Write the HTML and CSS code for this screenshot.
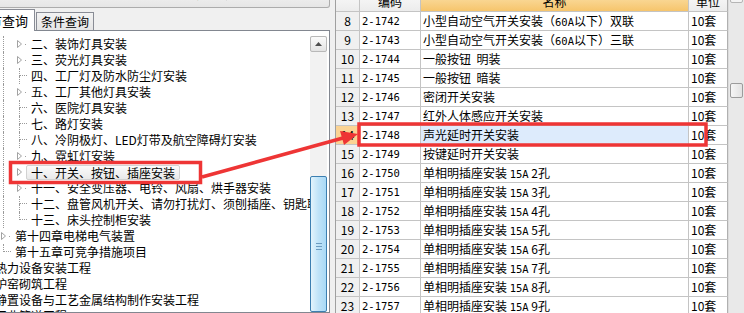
FILE: index.html
```html
<!DOCTYPE html>
<html lang="zh-CN">
<head>
    <meta charset="UTF-8">
    <title>定额查询</title>
    <link rel="stylesheet" href="styles.css">
</head>
<body>
    <div class="window">
        <div class="left">
            <div class="combo">
                <span class="combo-text">全统 安装工程预算定额河北省消耗量定额(2012)</span>
                <span class="combo-btn"></span>
            </div>
            <div class="tabs">
                <div class="tab active">章节查询</div>
                <div class="tab">条件查询</div>
            </div>
            <div class="treebox">
                <div class="tree">
                    <div class="row"><i class="guide"></i><i class="exp"><svg width="14" height="16"><polygon points="1.5,4.5 5.5,8 1.5,11.5" fill="#fff" stroke="#a2a2a2"/><rect x="9" y="8" width="1" height="1" fill="#a0a0a0"/></svg></i><span class="label">二、装饰灯具安装</span></div>
                    <div class="row"><i class="guide"></i><i class="exp"><svg width="14" height="16"><polygon points="1.5,4.5 5.5,8 1.5,11.5" fill="#fff" stroke="#a2a2a2"/><rect x="9" y="8" width="1" height="1" fill="#a0a0a0"/></svg></i><span class="label">三、荧光灯具安装</span></div>
                    <div class="row"><i class="guide"></i><i class="conn"><b class="up"></b><b class="down"></b></i><span class="label">四、工厂灯及防水防尘灯安装</span></div>
                    <div class="row"><i class="guide"></i><i class="exp"><svg width="14" height="16"><polygon points="1.5,4.5 5.5,8 1.5,11.5" fill="#fff" stroke="#a2a2a2"/><rect x="9" y="8" width="1" height="1" fill="#a0a0a0"/></svg></i><span class="label">五、工厂其他灯具安装</span></div>
                    <div class="row"><i class="guide"></i><i class="conn"><b class="up"></b><b class="down"></b></i><span class="label">六、医院灯具安装</span></div>
                    <div class="row"><i class="guide"></i><i class="conn"><b class="up"></b><b class="down"></b></i><span class="label">七、路灯安装</span></div>
                    <div class="row"><i class="guide"></i><i class="conn"><b class="up"></b><b class="down"></b></i><span class="label">八、冷阴极灯、LED灯带及航空障碍灯安装</span></div>
                    <div class="row"><i class="guide"></i><i class="exp"><svg width="14" height="16"><polygon points="1.5,4.5 5.5,8 1.5,11.5" fill="#fff" stroke="#a2a2a2"/><rect x="9" y="8" width="1" height="1" fill="#a0a0a0"/></svg></i><span class="label">九、霓虹灯安装</span></div>
                    <div class="row"><i class="guide"></i><i class="exp"><svg width="14" height="16"><polygon points="1.5,4.5 5.5,8 1.5,11.5" fill="#fff" stroke="#a2a2a2"/></svg></i><span class="label selected">十、开关、按钮、插座安装</span></div>
                    <div class="row"><i class="guide"></i><i class="exp"><svg width="14" height="16"><polygon points="1.5,4.5 5.5,8 1.5,11.5" fill="#fff" stroke="#a2a2a2"/><rect x="9" y="8" width="1" height="1" fill="#a0a0a0"/></svg></i><span class="label">十一、安全变压器、电铃、风扇、烘手器安装</span></div>
                    <div class="row"><i class="guide"></i><i class="conn"><b class="up"></b><b class="down"></b></i><span class="label">十二、盘管风机开关、请勿打扰灯、须刨插座、钥匙取电器安装</span></div>
                    <div class="row"><i class="guide"></i><i class="conn last"><b class="up"></b><b class="down"></b></i><span class="label">十三、床头控制柜安装</span></div>
                    <div class="row"><i class="exp"><svg width="14" height="16"><polygon points="1.5,4.5 5.5,8 1.5,11.5" fill="#fff" stroke="#a2a2a2"/><rect x="9" y="8" width="1" height="1" fill="#a0a0a0"/></svg></i><span class="label">第十四章电梯电气装置</span></div>
                    <div class="row"><i class="conn last"><b class="up"></b><b class="down"></b></i><span class="label">第十五章可竞争措施项目</span></div>
                    <div class="row"><span class="label top">热力设备安装工程</span></div>
                    <div class="row"><span class="label top">炉窑砌筑工程</span></div>
                    <div class="row"><span class="label top">静置设备与工艺金属结构制作安装工程</span></div>
                    <div class="row"><span class="label top">工业管道工程</span></div>
                </div>
                <div class="vscroll">
                    <div class="sbtn"><svg width="7" height="4"><polygon points="0,4 3.5,0 7,4" fill="#4d4d4d"/></svg></div>
                    <div class="track"></div>
                    <div class="thumb"><span class="grip"></span></div>
                </div>
            </div>
        </div>

        <div class="splitter"></div>

        <div class="grid">
            <div class="grow head">
                <div class="c rh"></div>
                <div class="c">编码</div>
                <div class="c name">名称</div>
                <div class="c">单位</div>
            </div>
            <div class="grow"><div class="c rh">8</div><div class="c code">2-1742</div><div class="c">小型自动空气开关安装（<span class="mono">60A</span>以下）双联</div><div class="c">10套</div></div>
            <div class="grow"><div class="c rh">9</div><div class="c code">2-1743</div><div class="c">小型自动空气开关安装（<span class="mono">60A</span>以下）三联</div><div class="c">10套</div></div>
            <div class="grow"><div class="c rh">10</div><div class="c code">2-1744</div><div class="c">一般按钮&nbsp; 明装</div><div class="c">10套</div></div>
            <div class="grow"><div class="c rh">11</div><div class="c code">2-1745</div><div class="c">一般按钮&nbsp; 暗装</div><div class="c">10套</div></div>
            <div class="grow"><div class="c rh">12</div><div class="c code">2-1746</div><div class="c">密闭开关安装</div><div class="c">10套</div></div>
            <div class="grow"><div class="c rh">13</div><div class="c code">2-1747</div><div class="c">红外人体感应开关安装</div><div class="c">10套</div></div>
            <div class="grow current"><div class="c rh">14</div><div class="c code">2-1748</div><div class="c sel">声光延时开关安装</div><div class="c">10套</div></div>
            <div class="grow"><div class="c rh">15</div><div class="c code">2-1749</div><div class="c">按键延时开关安装</div><div class="c">10套</div></div>
            <div class="grow"><div class="c rh">16</div><div class="c code">2-1750</div><div class="c">单相明插座安装 <span class="mono">15A</span> 2孔</div><div class="c">10套</div></div>
            <div class="grow"><div class="c rh">17</div><div class="c code">2-1751</div><div class="c">单相明插座安装 <span class="mono">15A</span> 3孔</div><div class="c">10套</div></div>
            <div class="grow"><div class="c rh">18</div><div class="c code">2-1752</div><div class="c">单相明插座安装 <span class="mono">15A</span> 4孔</div><div class="c">10套</div></div>
            <div class="grow"><div class="c rh">19</div><div class="c code">2-1753</div><div class="c">单相明插座安装 <span class="mono">15A</span> 5孔</div><div class="c">10套</div></div>
            <div class="grow"><div class="c rh">20</div><div class="c code">2-1754</div><div class="c">单相明插座安装 <span class="mono">15A</span> 6孔</div><div class="c">10套</div></div>
            <div class="grow"><div class="c rh">21</div><div class="c code">2-1755</div><div class="c">单相明插座安装 <span class="mono">15A</span> 7孔</div><div class="c">10套</div></div>
            <div class="grow"><div class="c rh">22</div><div class="c code">2-1756</div><div class="c">单相明插座安装 <span class="mono">15A</span> 8孔</div><div class="c">10套</div></div>
            <div class="grow"><div class="c rh">23</div><div class="c code">2-1757</div><div class="c">单相明插座安装 <span class="mono">15A</span> 9孔</div><div class="c">10套</div></div>
        </div>

        <div class="gscroll">
            <div class="gbtn"></div>
            <div class="gthumb"></div>
        </div>
    </div>

    <!-- 标注：红框和箭头 -->
    <svg class="annot" width="744" height="313">
        <rect x="10.5" y="162.5" width="190" height="20" fill="none" stroke="#ee3535" stroke-width="3.5"/>
        <rect x="359" y="124" width="347" height="21" fill="none" stroke="#ee3535" stroke-width="3.5"/>
        <line x1="202" y1="177" x2="343" y2="138" stroke="#ee3535" stroke-width="3.5"/>
        <polygon points="358,134 340,131 344,145" fill="#ee3535"/>
    </svg>
</body>
</html>
```

FILE: styles.css
```css
body {
    margin: 0;
    width: 744px;
    height: 313px;
    overflow: hidden;
    background-color: #f0f0f0;
    font-family: "Noto Sans CJK SC", "Liberation Sans", sans-serif;
    font-size: 12px;
    color: #000;
    position: relative;
}
.window {
    display: flex;
    height: 313px;
}

/* 左侧章节树 */
.left {
    width: 330px;
    flex: none;
    display: flex;
    flex-direction: column;
}
.combo {
    height: 22px;
    margin-top: -14px;
    box-sizing: border-box;
    border: 1px solid #acacac;
    border-left: none;
    border-radius: 0 3px 3px 0;
    background: linear-gradient(#f6f6f6, #e6e6e6);
    display: flex;
    align-items: flex-start;
    overflow: hidden;
}
.combo-text {
    flex: 1;
    margin-left: -24px;
    margin-top: -4px;
    white-space: nowrap;
    line-height: 20px;
}
.combo-btn {
    width: 14px;
}
.tabs {
    height: 22px;
    display: flex;
    align-items: flex-end;
}
.tab {
    height: 18px;
    box-sizing: border-box;
    padding: 0 4px;
    margin-left: 1px;
    border: 1px solid #898c95;
    border-bottom: none;
    background: linear-gradient(#f3f3f3, #e5e5e5);
    line-height: 17px;
    white-space: nowrap;
}
.tab.active {
    height: 22px;
    margin-left: -27px;
    margin-bottom: -1px;
    padding: 0 6px 0 2px;
    background: #fff;
    line-height: 22px;
    font-size: 13px;
    position: relative;
}
.treebox {
    flex: 1;
    display: flex;
    border: 1px solid #828790;
    border-left: none;
    background: #fff;
    overflow: hidden;
}
.tree {
    flex: 1;
    padding-top: 5px;
    overflow: hidden;
    min-width: 0;
}
.row {
    height: 16px;
    display: flex;
    align-items: center;
    white-space: nowrap;
}
.guide {
    width: 16px;
    height: 16px;
    margin-left: 3px;
    flex: none;
    box-sizing: border-box;
    border-left: 1px dotted #9a9a9a;
}
.row > .exp:first-child,
.row > .conn:first-child {
    margin-left: 0;
}
.exp {
    width: 14px;
    height: 16px;
    flex: none;
    margin-left: -3px;
}
.exp svg {
    display: block;
}
.conn {
    width: 14px;
    height: 16px;
    flex: none;
    margin-left: -3px;
    display: grid;
    grid-template-rows: 8px 8px;
}
.conn .up {
    margin: 0 3px 0 3px;
    border-left: 1px dotted #9a9a9a;
    border-bottom: 1px dotted #9a9a9a;
}
.conn .down {
    margin-left: 3px;
    border-left: 1px dotted #9a9a9a;
}
.conn.last .down {
    border-left: none;
}
.label {
    line-height: 16px;
    padding-left: 1px;
}
.label.top {
    margin-left: -6px;
}
.label.selected {
    margin-left: -4px;
    padding: 0 4px 0 4px;
    line-height: 13px;
    border: 1px solid #d2d2d2;
    border-radius: 2px;
    background: linear-gradient(#fbfbfb, #e9e9e9);
}
.vscroll {
    width: 17px;
    flex: none;
    margin: 5px 2px 0 0;
    display: flex;
    flex-direction: column;
    background: #f2f2f2;
}
.sbtn {
    height: 16px;
    box-sizing: border-box;
    border: 1px solid #b8b8b8;
    border-radius: 2px;
    background: linear-gradient(#fbfbfb, #e3e3e3);
    display: flex;
    align-items: center;
    justify-content: center;
}
.sbtn svg {
    display: block;
}
.track {
    height: 124px;
}
.thumb {
    flex: 1;
    border: 1px solid #3c7fb1;
    border-radius: 2px;
    background: linear-gradient(90deg, #e3f4fc, #bfe3f8 50%, #a9d9f6);
    padding-top: 66px;
    display: flex;
    justify-content: center;
}
.grip {
    width: 6px;
    height: 5px;
    border-top: 1px solid #6c9cc0;
    border-bottom: 1px solid #6c9cc0;
    background: linear-gradient(transparent 2px, #6c9cc0 2px, #6c9cc0 3px, transparent 3px);
}

.splitter {
    width: 5px;
    flex: none;
    border-right: 1px solid #a0a0a0;
}

/* 右侧定额表格 */
.grid {
    width: 392px;
    flex: none;
    margin-top: -8px;
    background: #fff;
}
.grow {
    display: grid;
    grid-template-columns: 24px 61px 268px 39px;
    height: 19px;
}
.grow.head {
    height: 20px;
}
.c {
    box-sizing: border-box;
    border-right: 1px solid #c4c4c4;
    border-bottom: 1px solid #c4c4c4;
    padding-left: 2px;
    line-height: 18px;
    white-space: nowrap;
    overflow: hidden;
}
.c:last-child {
    border-right: 1px solid #b0b0b0;
}
.c.rh {
    background: #f0f0f0;
    text-align: center;
    padding-left: 0;
}
.c.code {
    font-family: "DejaVu Sans Mono", monospace;
    font-size: 10.5px;
    padding-left: 2px;
}
.mono {
    font-family: "DejaVu Sans Mono", monospace;
    font-size: 10.5px;
}
.head .c {
    background: linear-gradient(#fafafa, #ececec);
    text-align: center;
    line-height: 20px;
    padding: 0;
}
.head .c.name {
    background: linear-gradient(#fbe2ad, #f6c56c);
}
.current .c.rh {
    background: #fbd393;
}
.current .c.sel {
    background: #ddebfc;
}
.gscroll {
    flex: 1;
    background: #e9e9e9;
    border-left: 1px solid #dcdcdc;
    display: flex;
    flex-direction: column;
    align-items: center;
}
.gbtn {
    width: 13px;
    height: 14px;
    margin-top: -11px;
    box-sizing: border-box;
    border: 1px solid #b5b5b5;
    border-radius: 2px;
    background: #f4f4f4;
}
.gthumb {
    width: 13px;
    height: 15px;
    margin-top: 80px;
    box-sizing: border-box;
    border: 1px solid #9c9c9c;
    border-radius: 2px;
    background: linear-gradient(90deg, #f6f6f6, #e2e2e2);
}

.annot {
    position: absolute;
    left: 0;
    top: 0;
    pointer-events: none;
}
```
